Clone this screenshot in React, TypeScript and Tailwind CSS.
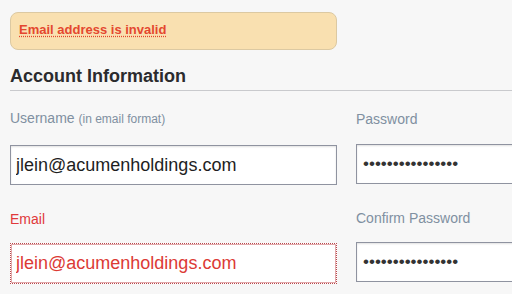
import React from 'react';

const font = { fontFamily: '"Liberation Sans", Arial, Helvetica, sans-serif' };

export default function App() {
  const dots = '••••••••••••••••';

  return (
    <div className="w-[512px] h-[294px] overflow-hidden bg-[#f7f7f7]" style={font}>
      <div className="w-[620px] pl-[10px]">
        {/* Error banner */}
        <div className="mt-[12px] w-[327px] h-[38px] rounded-[8px] border border-[#dcc9a2] bg-[#f9e0b0] pl-[8px] pt-[9px]">
          <a className="block text-[13px] leading-[16px] font-bold text-[#e4472f] underline decoration-dotted decoration-[#e4472f] underline-offset-2">
            Email address is invalid
          </a>
        </div>

        {/* Section heading */}
        <h2 className="mt-[15px] pb-[3px] border-b border-[#c9cacd] text-[18px] leading-[22px] font-bold text-[#2b2b2e]">
          Account Information
        </h2>

        <div className="grid grid-cols-[327px_200px] gap-x-[19px]">
          {/* Username */}
          <div>
            <label className="block mt-[19px] text-[14px] leading-[17px] text-[#8090a1]">
              Username <span className="text-[12px]">(in email format)</span>
            </label>
            <input
              readOnly
              value="jlein@acumenholdings.com"
              className="block mt-[17px] w-[327px] h-[40px] px-[5px] bg-white border border-[#8f93a0] shadow-[inset_0_1px_2px_rgba(0,0,0,0.12)] text-[18px] text-[#1e1e1e] outline-none"
            />
          </div>

          {/* Password */}
          <div>
            <label className="block mt-[20px] text-[14px] leading-[17px] text-[#8090a1]">Password</label>
            <input
              readOnly
              value={dots}
              className="block mt-[16px] w-[200px] h-[40px] px-[6px] bg-white border border-[#8f93a0] shadow-[inset_0_1px_2px_rgba(0,0,0,0.12)] text-[17px] text-[#333] outline-none"
            />
          </div>

          {/* Email */}
          <div>
            <label className="block mt-[26px] text-[14px] leading-[17px] text-[#e0393b]">Email</label>
            <input
              readOnly
              value="jlein@acumenholdings.com"
              className="block mt-[15px] w-[327px] h-[41px] px-[5px] bg-white border border-dotted border-[#b8484c] shadow-[inset_0_0_0_1px_#e2a9ab] text-[18px] text-[#dc3a35] outline-none"
            />
          </div>

          {/* Confirm password */}
          <div>
            <label className="block mt-[25px] text-[14px] leading-[17px] text-[#8090a1]">Confirm Password</label>
            <input
              readOnly
              value={dots}
              className="block mt-[15px] w-[200px] h-[40px] px-[6px] bg-white border border-[#8f93a0] shadow-[inset_0_1px_2px_rgba(0,0,0,0.12)] text-[17px] text-[#333] outline-none"
            />
          </div>
        </div>
      </div>
    </div>
  );
}
